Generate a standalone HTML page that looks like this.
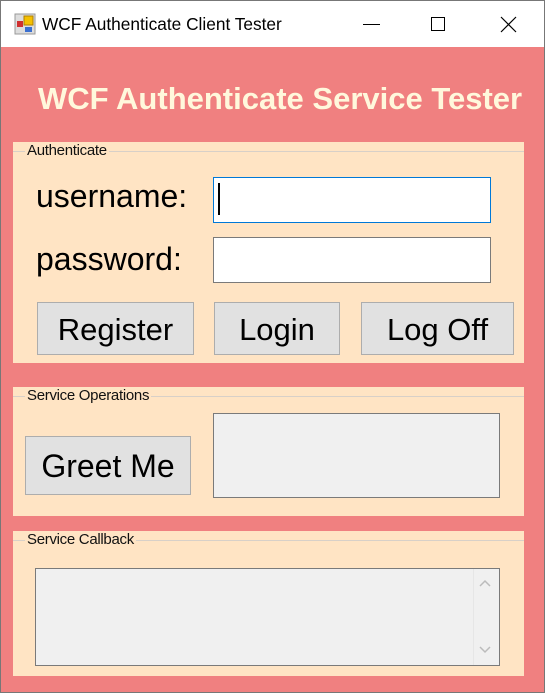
<!DOCTYPE html>
<html><head><style>
*{margin:0;padding:0;box-sizing:border-box}
body{width:545px;height:693px;overflow:hidden;background:#fff;font-family:"Liberation Sans",sans-serif;position:relative}
.a{position:absolute}
.win{left:0;top:0;width:545px;height:693px;border:1px solid #777}
.body{left:1px;top:47px;width:543px;height:645px;background:#F08080}
.gb{background:#FFE4C4;}
.gl{position:absolute;left:0;right:0;top:9px;border-top:1px solid #d8d0c8}
.gt{position:absolute;left:12px;top:0;background:#FFE4C4;font-size:15px;padding:0 2px;color:#111;letter-spacing:-0.3px}
.btn{background:#e1e1e1;border:1px solid #adadad;font-size:31px;text-align:center;color:#000}
.tb{background:#fff;border:1px solid #7a7a7a}
.ro{background:#f0f0f0;border:1px solid #7a7a7a}
.lbl{font-size:32px;color:#000}
</style></head><body>
<div class="a win"></div>
<svg class="a" style="left:14px;top:13px" width="22" height="22" viewBox="0 0 22 22">
<rect x="1" y="1" width="20" height="20" fill="#ddd" stroke="#999"/>
<rect x="10" y="3" width="9" height="9" fill="#f5c000" stroke="#b08000"/>
<rect x="3" y="8" width="6" height="6" fill="#d03030"/>
<rect x="11" y="14" width="7" height="5" fill="#3a6fd0"/>
</svg>
<div class="a" style="left:42px;top:14px;font-size:17.3px;color:#000">WCF Authenticate Client Tester</div>
<div class="a" style="left:363px;top:24px;width:17px;height:1px;background:#000"></div>
<div class="a" style="left:431px;top:17px;width:14px;height:14px;border:1px solid #000"></div>
<svg class="a" style="left:500px;top:16px" width="17" height="17"><path d="M1 1L16 16M16 1L1 16" stroke="#000" stroke-width="1.2"/></svg>
<div class="a body"></div>
<div class="a" style="left:38px;top:81px;font-size:31px;font-weight:bold;color:#FFF8DC;white-space:nowrap">WCF Authenticate Service Tester</div>

<div class="a gb" style="left:13px;top:142px;width:511px;height:221px"><div class="gl"></div><div class="gt">Authenticate</div></div>
<div class="a lbl" style="left:36px;top:178px">username:</div>
<div class="a lbl" style="left:36px;top:241px">password:</div>
<div class="a tb" style="left:213px;top:177px;width:278px;height:46px;border-color:#0078d7"></div>
<div class="a" style="left:218px;top:183px;width:2px;height:32px;background:#000"></div>
<div class="a tb" style="left:213px;top:237px;width:278px;height:46px"></div>
<div class="a btn" style="left:37px;top:302px;width:157px;height:53px;line-height:53px">Register</div>
<div class="a btn" style="left:214px;top:302px;width:126px;height:53px;line-height:53px">Login</div>
<div class="a btn" style="left:361px;top:302px;width:153px;height:53px;line-height:53px">Log Off</div>

<div class="a gb" style="left:13px;top:387px;width:511px;height:129px"><div class="gl"></div><div class="gt">Service Operations</div></div>
<div class="a btn" style="left:25px;top:436px;width:166px;height:59px;line-height:59px;font-size:32px">Greet Me</div>
<div class="a ro" style="left:213px;top:413px;width:287px;height:85px"></div>

<div class="a gb" style="left:13px;top:531px;width:511px;height:145px"><div class="gl"></div><div class="gt">Service Callback</div></div>
<div class="a ro" style="left:35px;top:568px;width:465px;height:98px"></div>
<div class="a" style="left:473px;top:569px;width:26px;height:96px;background:#f0f0f0;border-left:1px solid #e6e6e6"></div>
<svg class="a" style="left:479px;top:578px" width="12" height="10"><path d="M1 8L6 3L11 8" stroke="#bbb" stroke-width="1.5" fill="none"/></svg>
<svg class="a" style="left:479px;top:645px" width="12" height="10"><path d="M1 2L6 7L11 2" stroke="#bbb" stroke-width="1.5" fill="none"/></svg>
</body></html>
